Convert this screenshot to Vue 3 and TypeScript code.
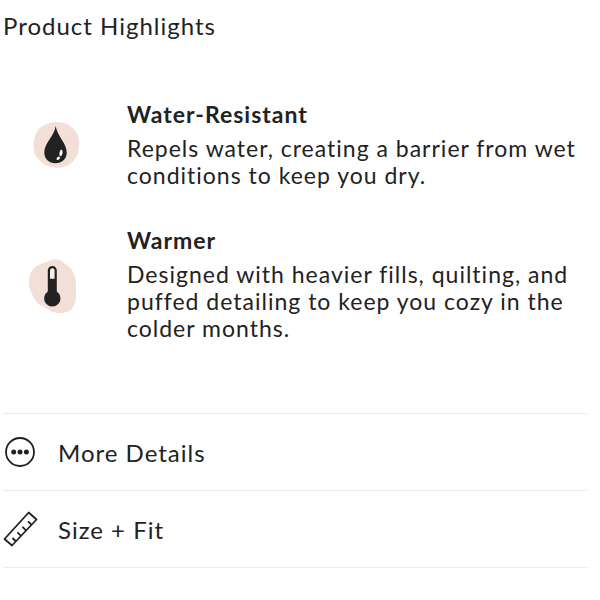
<script setup lang="ts">
interface Highlight {
  id: string
  title: string
  text: string
}

const highlights: Highlight[] = [
  { id: 'water', title: 'Water-Resistant', text: 'Repels water, creating a barrier from wet conditions to keep you dry.' },
  { id: 'warm', title: 'Warmer', text: 'Designed with heavier fills, quilting, and puffed detailing to keep you cozy in the colder months.' },
]
</script>

<template>
  <main class="product">
    <h1 class="heading">Product Highlights</h1>
    <ul class="highlights">
      <li v-for="item in highlights" :key="item.id" class="highlight">
        <svg v-if="item.id === 'water'" class="badge" viewBox="0 0 56 56" aria-hidden="true">
          <path class="blob" d="M11 13C16 7 25 4.500 34 5.500C44 7 51 14 52 24C53 33 50 42 43 47C36 52 25 52 17 47C10 43 6 36 6.500 28C7 22 8 17 11 13Z" />
          <path class="ink" d="M28.700 9C27.500 19 17.300 26 17.300 35.500C17.300 42 22 46.300 28.500 46.300C35 46.300 39.700 42 39.700 35.500C39.700 26 30 19 28.700 9Z" />
          <ellipse class="shine" cx="34" cy="36" rx="1.500" ry="3.200" transform="rotate(8 34 36)" />
          <ellipse class="shine" cx="31.300" cy="41.300" rx="1.300" ry="2" transform="rotate(48 31.300 41.300)" />
        </svg>
        <svg v-else class="badge" viewBox="0 0 56 56" aria-hidden="true">
          <path class="blob" d="M2 26C2 20 3 15 7 11C12 7 17 6 22 4C27 2 32 2 36 5C39 8 43 9 46 15C49 20 49 26 49 31C49 37 50 43 47 48C45 54 39 56 33 56C26 56 22 53 17 50C10 47 7 42 5 37C3 33 2 30 2 26Z" />
          <path class="ink" d="M20.800 34.500V13.500A4.500 4.500 0 0 1 29.800 13.500V34.500A8.200 8.200 0 1 1 20.800 34.500Z" />
          <path class="tube" d="M23 21.700V13.500A2.300 2.300 0 0 1 27.600 13.500V21.700Z" />
        </svg>
        <div class="copy">
          <h2 class="title">{{ item.title }}</h2>
          <p class="text">{{ item.text }}</p>
        </div>
      </li>
    </ul>
    <div class="panels">
      <button type="button" class="panel">
        <svg class="icon" viewBox="0 0 36 36" aria-hidden="true">
          <circle cx="17" cy="18" r="14" />
          <g class="dots"><circle cx="10.700" cy="18" r="2.500" /><circle cx="17" cy="18" r="2.500" /><circle cx="23.400" cy="18" r="2.500" /></g>
        </svg>
        <span>More Details</span>
      </button>
      <button type="button" class="panel">
        <svg class="icon" viewBox="0 0 36 36" aria-hidden="true">
          <path d="M1.500 28L25.700 1.500L33.500 8.500L9 34.500ZM9.500 27L13 30.500M14.500 21.300L18 25M19.500 15.800L23 19.500M25 10.300L28.300 13.700" />
        </svg>
        <span>Size + Fit</span>
      </button>
    </div>
  </main>
</template>

<style>
body { margin: 0; background: #fff; }
</style>

<style scoped>
.product { padding: 10px 13px 0 3px; color: #222; font-family: Lato, sans-serif; font-size: 24px; letter-spacing: 1px; }
.heading { margin: 0; font-size: 24px; line-height: 32px; font-weight: 400; }
.highlights { list-style: none; margin: 0; padding: 59px 0 71px; display: grid; gap: 38px; }
.highlight { display: flex; align-items: center; gap: 44px; }
.badge { width: 56px; height: 56px; flex: none; margin-left: 24px; }
.copy { flex: 1; min-width: 0; font-size: 23px; line-height: 27px; }
.title { margin: 0 0 7px; font-size: 23px; font-weight: 700; }
.text { margin: 0; }
.blob { fill: #f2dfd7; }
.ink { fill: #222; }
.tube { fill: #f8ece7; }
.shine { fill: #fff; }
.panels { border-top: 1px solid #ebebeb; }
.panel { display: flex; align-items: center; gap: 19px; width: 100%; height: 77px; padding: 0; border: 0; border-bottom: 1px solid #ebebeb; background: none; color: inherit; font: inherit; letter-spacing: inherit; text-align: left; cursor: pointer; }
.icon { width: 36px; height: 36px; flex: none; fill: none; stroke: #222; stroke-width: 1.8; stroke-linejoin: round; }
.dots { fill: #222; stroke: none; }
</style>
